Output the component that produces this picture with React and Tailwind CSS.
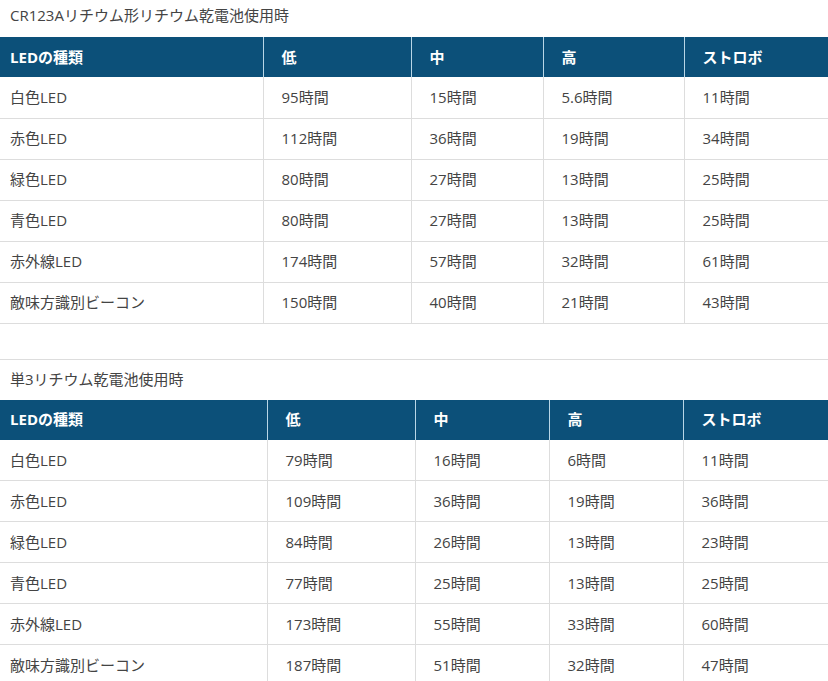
import React from 'react';

const headers = ['LEDの種類', '低', '中', '高', 'ストロボ'];

const tables = [
  {
    title: 'CR123Aリチウム形リチウム乾電池使用時',
    widths: [263, 148, 132, 141, 144],
    rows: [
      ['白色LED', '95時間', '15時間', '5.6時間', '11時間'],
      ['赤色LED', '112時間', '36時間', '19時間', '34時間'],
      ['緑色LED', '80時間', '27時間', '13時間', '25時間'],
      ['青色LED', '80時間', '27時間', '13時間', '25時間'],
      ['赤外線LED', '174時間', '57時間', '32時間', '61時間'],
      ['敵味方識別ビーコン', '150時間', '40時間', '21時間', '43時間'],
    ],
  },
  {
    title: '単3リチウム乾電池使用時',
    widths: [267, 148, 134, 134, 145],
    rows: [
      ['白色LED', '79時間', '16時間', '6時間', '11時間'],
      ['赤色LED', '109時間', '36時間', '19時間', '36時間'],
      ['緑色LED', '84時間', '26時間', '13時間', '23時間'],
      ['青色LED', '77時間', '25時間', '13時間', '25時間'],
      ['赤外線LED', '173時間', '55時間', '33時間', '60時間'],
      ['敵味方識別ビーコン', '187時間', '51時間', '32時間', '47時間'],
    ],
  },
];

const RuntimeTable = ({ widths, rows }) => (
  <table className="w-full table-fixed border-collapse">
    <colgroup>
      {widths.map((w, i) => (
        <col key={i} style={{ width: w }} />
      ))}
    </colgroup>
    <thead>
      <tr className="h-[40px] bg-[#0c5079] text-white">
        {headers.map((h, i) => (
          <th
            key={h}
            className={`text-left font-bold text-[15px] border-l border-[#b9d6e6] first:border-l-0
                      ${i === 0 ? 'pl-[10px]' : 'pl-[18px]'}`}
          >
            {h}
          </th>
        ))}
      </tr>
    </thead>
    <tbody>
      {rows.map((row) => (
        <tr key={row[0]} className="h-[41px] border-b border-[#dddddd]">
          {row.map((cell, i) => (
            <td
              key={i}
              className={`text-[15px] text-[#444444] border-l border-[#dddddd] first:border-l-0
                        ${i === 0 ? 'pl-[10px]' : 'pl-[18px]'}`}
            >
              {cell}
            </td>
          ))}
        </tr>
      ))}
    </tbody>
  </table>
);

export default function App() {
  return (
    <div
      className="w-[828px] h-[681px] overflow-hidden bg-white"
      style={{ fontFamily: '"Open Sans", "Noto Sans CJK JP", sans-serif' }}
    >
      <div className="h-[37px] pt-[3px] px-[10px] text-[15px] leading-6 text-[#444444]">
        {tables[0].title}
      </div>
      <RuntimeTable {...tables[0]} />

      <div className="mt-[35px] border-t border-[#dddddd]">
        <div className="h-[40px] pt-[7px] px-[10px] text-[15px] leading-6 text-[#444444]">
          {tables[1].title}
        </div>
        <RuntimeTable {...tables[1]} />
      </div>
    </div>
  );
}
